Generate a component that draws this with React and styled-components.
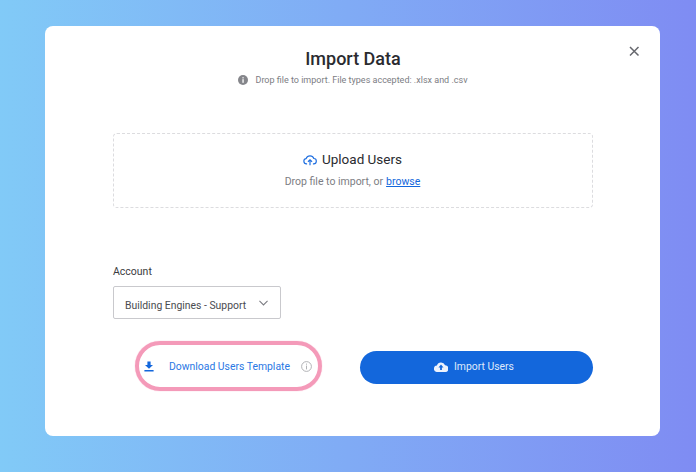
import React from 'react';
import styled, { createGlobalStyle } from 'styled-components';

const Global = createGlobalStyle`
  html, body { margin: 0; padding: 0; }
  body { font-family: Roboto, "Liberation Sans", sans-serif; }
`;

const Page = styled.div`
  width: 696px;
  height: 472px;
  box-sizing: border-box;
  padding: 26px 36px 36px 45px;
  background: linear-gradient(90deg, #81caf7 0%, #7f8cf3 100%);
  overflow: hidden;
`;

const Modal = styled.div`
  position: relative;
  width: 615px;
  height: 410px;
  box-sizing: border-box;
  padding: 22px 67px 0 68px;
  background: #fff;
  border-radius: 8px;
  display: flex;
  flex-direction: column;
`;

const Close = styled.button`
  position: absolute;
  top: 18px;
  right: 19px;
  width: 14px;
  height: 14px;
  padding: 0;
  border: 0;
  background: none;
  display: flex;
`;

const Title = styled.h1`
  margin: 0;
  font-size: 18px;
  line-height: 21px;
  font-weight: 500;
  color: #2a2b30;
  text-align: center;
`;

const Hint = styled.div`
  margin-top: 4px;
  display: flex;
  justify-content: center;
  align-items: center;
  gap: 7px;
  height: 14px;
  font-size: 9px;
  color: #7c7d83;
`;

const Drop = styled.div`
  margin-top: 46px;
  height: 75px;
  box-sizing: border-box;
  border: 1px dashed #dcdcdf;
  border-radius: 4px;
  display: flex;
  flex-direction: column;
  align-items: center;
  padding: 17px 1px 0 0;
`;

const DropTitle = styled.div`
  display: flex;
  align-items: center;
  gap: 5px;
  font-size: 13.5px;
  line-height: 17px;
  color: #2a2b30;
`;

const DropText = styled.div`
  margin-top: 7px;
  font-size: 10.5px;
  line-height: 14px;
  color: #7c7d83;
`;

const Browse = styled.a`
  margin-left: 3px;
  color: #1367dc;
  text-decoration: underline;
`;

const Label = styled.div`
  margin-top: 57px;
  font-size: 10.5px;
  line-height: 13px;
  color: #3a3b40;
`;

const Select = styled.div`
  margin-top: 8px;
  width: 168px;
  height: 33px;
  box-sizing: border-box;
  border: 1px solid #c9c9cd;
  border-radius: 2px;
  display: flex;
  align-items: center;
  justify-content: space-between;
  padding: 0 12px 0 11px;
  font-size: 10.4px;
  color: #4a4b50;
`;

const SelectValue = styled.span`
  padding-top: 6px;
`;

const Actions = styled.div`
  margin-top: 22px;
  display: flex;
  align-items: center;
`;

const Download = styled.div`
  margin-left: 22px;
  width: 187px;
  height: 50px;
  box-sizing: border-box;
  border: 4px solid #f49ab9;
  border-radius: 25px;
  box-shadow: 0 0 1px #f49ab9;
  display: flex;
  align-items: center;
  padding: 0 0 0 5px;
  font-size: 10.4px;
  color: #2a78e4;
`;

const DownloadLabel = styled.span`
  margin-left: 15px;
  margin-right: 11px;
  white-space: nowrap;
`;

const ImportButton = styled.button`
  margin: 2px 0 0 38px;
  width: 233px;
  height: 33px;
  border: 0;
  border-radius: 17px;
  background: #1367dc;
  color: #dfe9fb;
  display: flex;
  align-items: center;
  justify-content: center;
  gap: 6px;
  padding: 0 5px 1px 0;
  font-family: inherit;
  font-size: 10.4px;
`;

export default function App() {
  return (
    <>
      <Global />
      <Page>
        <Modal>
          <Close aria-label="Close">
            <svg width="14" height="14" viewBox="0 0 14 14">
              <path d="M3 3l8.5 8.5M11.5 3L3 11.5" stroke="#66676d" strokeWidth="1.5" fill="none" />
            </svg>
          </Close>
          <Title>Import Data</Title>
          <Hint>
            <svg width="10" height="10" viewBox="0 0 10 10">
              <circle cx="5" cy="5" r="5" fill="#85868b" />
              <rect x="4.4" y="4.2" width="1.3" height="3.6" fill="#fff" />
              <rect x="4.4" y="2.2" width="1.3" height="1.2" fill="#fff" />
            </svg>
            <span>Drop file to import. File types accepted: .xlsx and .csv</span>
          </Hint>
          <Drop>
            <DropTitle>
              <svg width="14" height="14" viewBox="0 0 24 24" fill="none" stroke="#1f6fe0" strokeWidth="2">
                <path d="M7 18.5H6a4.5 4.5 0 0 1-.6-8.96A7 7 0 0 1 18.6 9.5 4.5 4.5 0 0 1 18 18.5h-1" />
                <path d="M12 21v-9M8.5 15l3.5-3.5 3.5 3.5" />
              </svg>
              <span>Upload Users</span>
            </DropTitle>
            <DropText>
              Drop file to import, or<Browse href="#">browse</Browse>
            </DropText>
          </Drop>
          <Label>Account</Label>
          <Select>
            <SelectValue>Building Engines - Support</SelectValue>
            <svg width="9" height="6" viewBox="0 0 10 6" fill="none" stroke="#7c7d83" strokeWidth="1.2">
              <path d="M0.5 0.7l4.5 4.5 4.5-4.5" />
            </svg>
          </Select>
          <Actions>
            <Download>
              <svg width="10" height="11" viewBox="0 0 10 11">
                <path d="M3.4 0.5h3.2v3.6H9L5 7.7 1 4.1h2.4z M0.4 9h9.2v1.5H0.4z" fill="#1367dc" />
              </svg>
              <DownloadLabel>Download Users Template</DownloadLabel>
              <svg width="11" height="11" viewBox="0 0 11 11" fill="none" stroke="#a9aaae" strokeWidth="0.9">
                <circle cx="5.5" cy="5.5" r="4.9" />
                <path d="M5.5 4.6v3.8M5.5 2.6v1.1" />
              </svg>
            </Download>
            <ImportButton>
              <svg width="14" height="11" viewBox="0 0 14 11">
                <path
                  fillRule="evenodd"
                  d="M3.3 11A3.2 3.2 0 0 1 2.9 4.6 4.4 4.4 0 0 1 11.1 4.2 3.4 3.4 0 0 1 10.8 11zM7 3.6L4.5 6.4h1.6V9h1.8V6.4h1.6z"
                  fill="#eef3fd"
                />
              </svg>
              <span>Import Users</span>
            </ImportButton>
          </Actions>
        </Modal>
      </Page>
    </>
  );
}
